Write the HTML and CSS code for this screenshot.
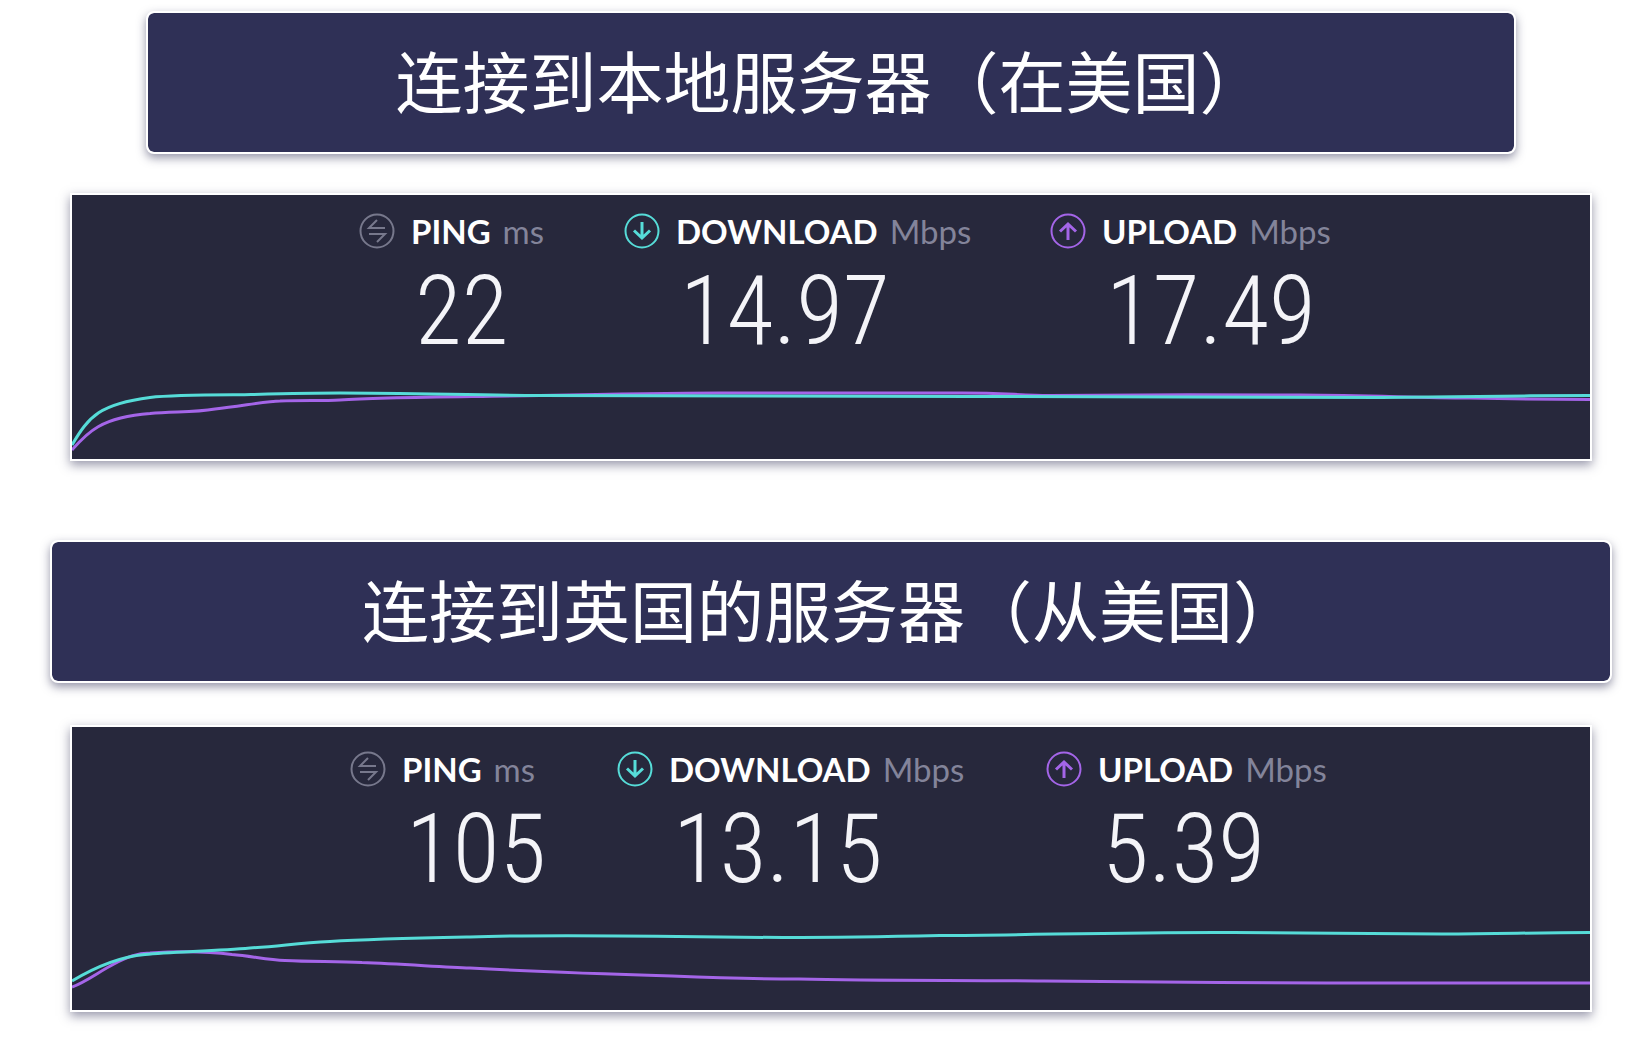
FILE: index.html
```html
<!DOCTYPE html>
<html lang="zh-CN">
<head>
    <meta charset="UTF-8">
    <title>速度测试</title>
    <link rel="stylesheet" href="styles.css">
</head>
<body>
    <svg class="symbols" aria-hidden="true">
        <symbol id="icon-ping" viewBox="0 0 36 36">
            <circle cx="18" cy="18" r="16.500"/>
            <path d="M26 15H10l8-8M10 21h16l-8 8"/>
        </symbol>
        <symbol id="icon-download" viewBox="0 0 36 36">
            <circle cx="18" cy="18" r="16.500"/>
            <path class="arrow" d="M18 9v16M10 17.500L18 25l8-7.500"/>
        </symbol>
        <symbol id="icon-upload" viewBox="0 0 36 36">
            <circle cx="18" cy="18" r="16.500"/>
            <path class="arrow" d="M18 27V11M10 18.500L18 11l8 7.500"/>
        </symbol>
    </svg>

    <section class="test local">
        <h2 class="banner">连接到本地服务器（在美国）</h2>
        <div class="panel">
            <div class="metrics">
                <div class="metric">
                    <div class="label"><svg class="icon ping"><use href="#icon-ping"/></svg><b>PING</b> <span>ms</span></div>
                    <div class="value">22</div>
                </div>
                <div class="metric">
                    <div class="label"><svg class="icon download"><use href="#icon-download"/></svg><b>DOWNLOAD</b> <span>Mbps</span></div>
                    <div class="value">14.97</div>
                </div>
                <div class="metric">
                    <div class="label"><svg class="icon upload"><use href="#icon-upload"/></svg><b>UPLOAD</b> <span>Mbps</span></div>
                    <div class="value">17.49</div>
                </div>
            </div>
            <svg class="chart" viewBox="0 0 1518 80" preserveAspectRatio="none">
                <path class="upload" d="M0 71C14 55 28 38 78 34.500C100 32 120 34 143 30C170 27 195 22 208 22C230 21 250 22 268 21C310 18 380 18 468 16.500C540 15 590 14 648 14H890C930 14 945 16 978 16.500C1050 16 1150 15.500 1228 16C1300 16.500 1340 18.500 1398 19C1440 20 1480 20.500 1518 20.500"/>
                <path class="download" d="M0 66C17 37 28 25 78 18.500C100 16 130 16 168 15.800C200 15 235 14 268 14C330 14 400 16 468 16.500C620 18 760 16 900 17.500C1050 18 1200 19 1310 18.500C1400 18 1450 16.500 1518 16.500"/>
            </svg>
        </div>
    </section>

    <section class="test remote">
        <h2 class="banner">连接到英国的服务器（从美国）</h2>
        <div class="panel">
            <div class="metrics">
                <div class="metric">
                    <div class="label"><svg class="icon ping"><use href="#icon-ping"/></svg><b>PING</b> <span>ms</span></div>
                    <div class="value">105</div>
                </div>
                <div class="metric">
                    <div class="label"><svg class="icon download"><use href="#icon-download"/></svg><b>DOWNLOAD</b> <span>Mbps</span></div>
                    <div class="value">13.15</div>
                </div>
                <div class="metric">
                    <div class="label"><svg class="icon upload"><use href="#icon-upload"/></svg><b>UPLOAD</b> <span>Mbps</span></div>
                    <div class="value">5.39</div>
                </div>
            </div>
            <svg class="chart" viewBox="0 0 1518 93" preserveAspectRatio="none">
                <path class="upload" d="M0 70C14 65 28 54 42 47C55 40 65 36 78 36C110 34 140 35 160 37.500C180 39 195 43 213 43.500C240 45 265 44 290 45.500C330 47 370 50 398 51C450 54 530 57 600 59C650 61 680 62 727 62C810 64 890 63 972 64C1070 65 1160 66 1255 66H1518"/>
                <path class="download" d="M0 64C20 52 45 40 73 37.500C100 35 145 34 178 31C210 29 225 26 258 24.500C300 22 350 21 398 20C450 18 580 19 649 20C720 21 800 20 868 18.500C960 18 1060 15 1161 15.500C1240 15.500 1290 17 1370 17C1430 17 1460 15.500 1518 15.500"/>
            </svg>
        </div>
    </section>
</body>
</html>
```

FILE: styles.css
```css
body {
    margin: 0;
    padding: 11px 26px 24px 50px;
    background: #fff;
}
.symbols {
    display: none;
}
.banner {
    margin: 0;
    padding: 16px 0 24px;
    border: 2px solid #fff;
    border-radius: 8px;
    background: #2f3056;
    background-clip: padding-box;
    box-shadow: 0 4px 10px rgba(47, 48, 86, 0.5);
    color: #fff;
    font-family: "Noto Sans CJK SC", sans-serif;
    font-size: 67px;
    font-weight: 400;
    line-height: 99px;
    text-align: center;
}
.panel {
    margin: 39px 20px 0;
    border: 2px solid #fff;
    background: #27283c;
    background-clip: padding-box;
    box-shadow: 0 4px 10px rgba(47, 48, 86, 0.5);
}
/* first column is the empty space left of the ping */
.metrics {
    display: grid;
    grid-template-columns: 287fr 265fr 426fr 540fr;
    padding-top: 18px;
}
.local .banner {
    margin: 0 96px;
}
.remote {
    margin-top: 79px;
}
.remote .panel {
    margin-top: 42px;
}
.remote .metrics {
    grid-template-columns: 278fr 267fr 429fr 544fr;
    padding-top: 24px;
}
.metric {
    min-width: 0;
}
.metric:first-child {
    grid-column-start: 2;
}
.label {
    display: flex;
    align-items: center;
    height: 36px;
    color: #fff;
    font-family: Lato, sans-serif;
    font-size: 33px;
    line-height: 36px;
    white-space: nowrap;
}
.label b {
    margin: 0 12px 0 16px;
}
.label span {
    color: #83849a;
}
.icon {
    width: 36px;
    height: 36px;
    fill: none;
    stroke-width: 2;
}
.arrow {
    stroke-width: 3;
}
.value {
    height: 130px;
    padding-left: 56px;
    color: #f4f4f8;
    font-family: "Roboto Condensed", "Roboto", sans-serif;
    font-size: 96px;
    font-weight: 300;
    line-height: 124px;
}
.chart {
    display: block;
    width: 100%;
    height: 80px;
    fill: none;
    stroke-width: 3;
}
.remote .chart {
    height: 93px;
}
.ping {
    stroke: #77788c;
}
.download {
    stroke: #56dcd8;
}
.upload {
    stroke: #a465e8;
}
```
